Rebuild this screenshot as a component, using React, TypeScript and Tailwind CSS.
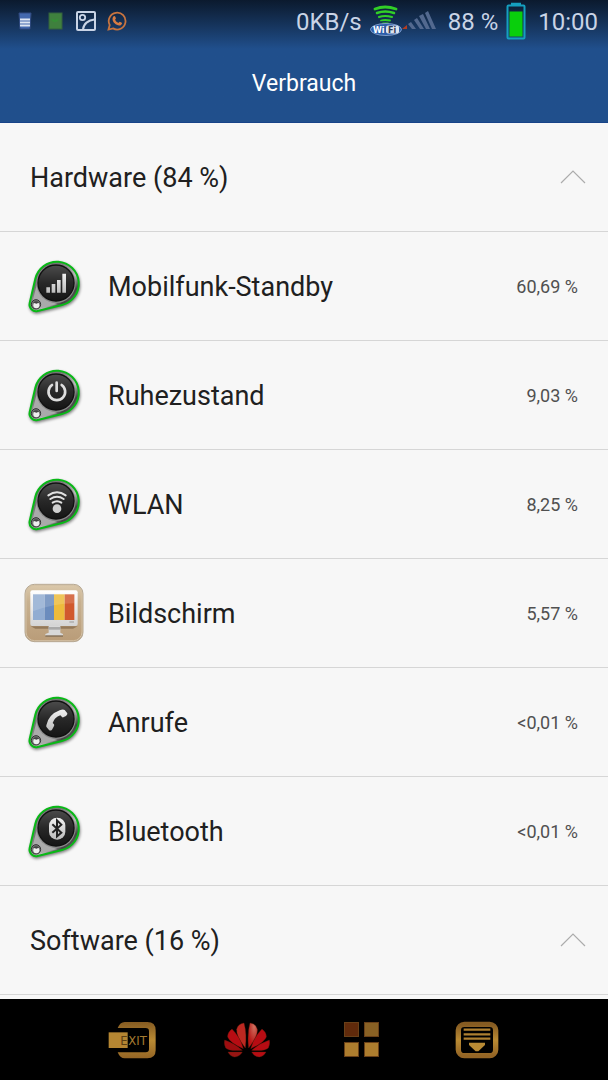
import { useState, type ReactNode } from 'react';

interface UsageItem {
  name: string;
  value: string;
  icon: ReactNode;
}

const TEARDROP = 'M34 61A66 66 0 1 1 114 140L41 158A20 20 0 0 1 17 134Z';

const hardware: UsageItem[] = [
  { name: 'Mobilfunk-Standby', value: '60,69 %', icon: <DropIcon id="cell"><SignalGlyph /></DropIcon> },
  { name: 'Ruhezustand', value: '9,03 %', icon: <DropIcon id="idle"><PowerGlyph /></DropIcon> },
  { name: 'WLAN', value: '8,25 %', icon: <DropIcon id="wlan"><WifiGlyph /></DropIcon> },
  { name: 'Bildschirm', value: '5,57 %', icon: <ScreenIcon /> },
  { name: 'Anrufe', value: '<0,01 %', icon: <DropIcon id="call"><PhoneGlyph /></DropIcon> },
  { name: 'Bluetooth', value: '<0,01 %', icon: <DropIcon id="bt"><BluetoothGlyph /></DropIcon> },
];

export default function App() {
  return (
    <div className="flex h-screen flex-col bg-[#f7f7f7] font-['Roboto','Noto_Sans',sans-serif] text-[#202020]">
      <header className="shrink-0 border-b border-[#174388] bg-linear-to-b from-[#0b1a2e] via-[#204f8c] via-40% to-[#204f8c]">
        <StatusBar />
        <h1 className="pt-[26px] pb-[22px] text-center text-[23px] leading-8 text-white">Verbrauch</h1>
      </header>

      <main className="min-h-0 flex-1 overflow-hidden">
        <Section title="Hardware (84 %)" items={hardware} />
        <Section title="Software (16 %)" items={[]} />
      </main>

      <NavBar />
    </div>
  );
}

function Section({ title, items }: { title: string; items: UsageItem[] }) {
  const [open, setOpen] = useState(true);

  return (
    <section>
      <h2>
        <button
          type="button"
          aria-expanded={open}
          onClick={() => setOpen(!open)}
          className="flex h-[109px] w-full items-center justify-between border-b border-[#d6d6d6] pr-[22px] pl-[30px] text-left text-[27px]"
        >
          <span className="pt-[2px]">{title}</span>
          <svg width="26" height="14" viewBox="0 0 26 14" fill="none" stroke="#acacac" strokeWidth="1.2" className={open ? '' : 'rotate-180'}>
            <path d="M1 13 13 1l12 12" />
          </svg>
        </button>
      </h2>
      {open && (
        <ul>
          {items.map(item => (
            <li key={item.name} className="flex h-[109px] items-center border-b border-[#d6d6d6] pr-[30px] pl-6">
              {item.icon}
              <span className="ml-6 flex-1 pt-[2px] text-[27px]">{item.name}</span>
              <span className="pt-[2px] text-lg text-[#505050]">{item.value}</span>
            </li>
          ))}
        </ul>
      )}
    </section>
  );
}

function StatusBar() {
  return (
    <div className="flex h-[42px] items-center pr-[10px] pl-[18px] text-2xl text-[#c9d4e6]">
      <div className="flex items-center gap-[11px]">
        {/* Notifications */}
        <svg width="16" height="18" viewBox="0 0 16 18">
          <path d="M1 1h12l-1 16H2Z" fill="#4469ae" stroke="#304a80" />
          <path d="M2 7.500h10M2 10.500h10M2 13.500h10" stroke="#dde5f2" strokeWidth="2" />
        </svg>
        <svg width="20" height="18" viewBox="0 0 20 18">
          <rect x="4" y="1" width="13" height="16" fill="#3f803e" stroke="#35613f" />
          <path d="M7 9l1-2 1 3 1-2 1 2 1-3 1 2" fill="none" stroke="#358f36" />
        </svg>
        <svg width="20" height="20" viewBox="0 0 20 20" fill="none" stroke="#c9d4e6" strokeWidth="2">
          <rect x="1" y="1" width="18" height="18" rx="1" />
          <circle cx="6.500" cy="6.500" r="2.700" strokeWidth="1.800" />
          <path d="M7 18.500C7.500 13 12 9 18.500 8.500" />
        </svg>
        <svg width="20" height="20" viewBox="0 0 20 20">
          <path d="M1.500 18.500 2.700 14A8.400 8.400 0 1 1 6 17.400Z" fill="none" stroke="#c8743f" strokeWidth="1.800" />
          <path d="M6.300 5.500c1-1 1.700-.6 2 .3l.6 1.500c.1.500-.7 1.100-.8 1.400.7 1.500 1.700 2.500 3.300 3.200.5-.2.900-1.200 1.400-1.100l2 1c.7.400-.2 2.200-1.400 2.600-2 .6-4.200-.5-5.800-2.100S4.600 8 6.300 5.500Z" fill="#d77b42" />
        </svg>
      </div>

      <span className="ml-auto pt-[2px]">0KB/s</span>
      <WifiStatus />
      <svg width="34" height="20" viewBox="0 0 34 20" fill="#53698f">
        <path d="M0 18 5 14v4Z" fill="#b33c20" />
        <path d="M6 13l3-2 5 7h-4Z M12 9l3-2 7 11h-4Z M17 5l4-2 7 15h-4Z M23 2l3-2 8 18h-4Z" />
      </svg>
      <span className="ml-3 pt-[2px]">88 %</span>
      <svg width="20" height="38" viewBox="0 0 20 38" className="ml-2">
        <rect x="1.500" y="3.500" width="17" height="33" rx="1" fill="none" stroke="#159fc0" strokeWidth="2" />
        <path d="M5 2h10" stroke="#159fc0" strokeWidth="2.500" />
        <rect x="3.500" y="9.500" width="13" height="25" fill="#09cf0c" />
      </svg>
      <span className="ml-3 pt-[2px]">10:00</span>
    </div>
  );
}

function WifiStatus() {
  return (
    <svg width="32" height="32" viewBox="0 0 32 32" className="ml-2">
      <g fill="none" stroke="#31cf27" strokeLinecap="round">
        <path d="M5 4q10-4 21 0" strokeWidth="2.800" />
        <path d="M7 8q8-3 17 0" strokeWidth="2.500" />
        <path d="M9 12q6-2 13 0" strokeWidth="2.200" />
        <path d="M11 15.500q4-1 9 0M13 18.500h5" strokeWidth="1.800" />
      </g>
      <ellipse cx="16" cy="24.500" rx="15.500" ry="6" fill="#2c5daa" stroke="#7e9cca" />
      <rect x="16" y="20.500" width="13" height="8" rx="2" fill="#dde4ed" />
      <text x="3" y="27.500" fill="#ffffff" fontFamily="DejaVu Sans" fontWeight="bold" fontSize="8">Wi</text>
      <text x="18" y="27.500" fill="#303b56" fontFamily="DejaVu Sans" fontWeight="bold" fontSize="8">Fi</text>
    </svg>
  );
}

function DropIcon({ id, children }: { id: string; children: ReactNode }) {
  return (
    <svg width="60" height="60" viewBox="0 -7 180 180" className="shrink-0 overflow-visible">
      <defs>
        <linearGradient id={`${id}-metal`} x1="0" y1="0" x2="1" y2="1">
          <stop offset="0" stopColor="#555" />
          <stop offset="0.35" stopColor="#777" />
          <stop offset="0.6" stopColor="#bbb" />
          <stop offset="0.75" stopColor="#444" />
          <stop offset="1" stopColor="#888" />
        </linearGradient>
        <linearGradient id={`${id}-face`} x1="0" y1="0" x2="0" y2="1">
          <stop offset="0" stopColor="#4c4c4c" />
          <stop offset="0.5" stopColor="#282828" />
          <stop offset="1" stopColor="#151515" />
        </linearGradient>
        <linearGradient id={`${id}-glyph`} x1="0" y1="0" x2="0" y2="1">
          <stop offset="0" stopColor="#f2f2f2" />
          <stop offset="1" stopColor="#bcbcbc" />
        </linearGradient>
        <filter id={`${id}-shadow`} x="-20%" y="-20%" width="140%" height="140%">
          <feGaussianBlur stdDeviation="4" />
        </filter>
      </defs>
      <path d={TEARDROP} fill="#000" opacity="0.5" stroke="#000" strokeWidth="5" transform="translate(2 5)" filter={`url(#${id}-shadow)`} />
      <path d={TEARDROP} fill={`url(#${id}-metal)`} stroke="#08b916" strokeWidth="6" strokeLinejoin="round" />
      <path d="M26 128 38 80Q50 125 100 137L46 151Z" fill="#aaa" />
      <circle cx="96" cy="75" r="59" fill="#8a8a8a" />
      <circle cx="96" cy="74" r="54" fill={`url(#${id}-face)`} stroke="#111" strokeWidth="4" />
      <circle cx="36" cy="138" r="14" fill="#777" stroke="#333" strokeWidth="3" />
      <circle cx="37" cy="141" r="9" fill="#eee" />
      <path d="M27 133q8-8 19-1l-8 4Z" fill="#444" />
      <g fill={`url(#${id}-glyph)`} stroke="none">{children}</g>
    </svg>
  );
}

function SignalGlyph() {
  return <path d="M67 87h11v16H67ZM83 77h11v26H83ZM99 65h11v38H99ZM115 46h11v57h-11Z" />;
}

function PowerGlyph() {
  return (
    <g fill="none" stroke="#dedede" strokeWidth="8" strokeLinecap="round">
      <path d="M84 53A25 25 0 1 0 113 53" />
      <path d="M98 46v25" />
    </g>
  );
}

function WifiGlyph() {
  return (
    <>
      <g fill="none" stroke="#e2e2e2" strokeWidth="6" strokeLinecap="round">
        <path d="M73 57Q99 39 125 57" />
        <path d="M79 68Q99 55 119 68" />
        <path d="M86 79Q99 70 112 79" />
      </g>
      <circle cx="99" cy="97" r="13" fill="#cfcfcf" />
    </>
  );
}

function PhoneGlyph() {
  return (
    <path d="M67 93Q74 60 107 48Q117 44 122 47L130 57Q131 61 126 65L118 69Q114 70 112 66L109 63Q91 70 86 86L90 90Q92 93 89 97L84 106Q79 111 75 107L68 99Q66 97 67 93Z" />
  );
}

function BluetoothGlyph() {
  return (
    <>
      <rect x="75" y="43" width="49" height="66" rx="24" />
      <path d="M85 63 112 88 99 99V51L112 64 85 88" fill="none" stroke="#222" strokeWidth="6" />
    </>
  );
}

function ScreenIcon() {
  return (
    <svg width="60" height="60" viewBox="0 0 180 180" className="shrink-0">
      <defs>
        <linearGradient id="screen-base" x1="0" y1="0" x2="0" y2="1">
          <stop offset="0" stopColor="#dccaac" />
          <stop offset="0.3" stopColor="#c8b190" />
          <stop offset="1" stopColor="#b99c78" />
        </linearGradient>
        <linearGradient id="screen-frame" x1="0" y1="0" x2="0" y2="1">
          <stop offset="0" stopColor="#fff" />
          <stop offset="1" stopColor="#d4d4d4" />
        </linearGradient>
      </defs>
      <rect x="3" y="4" width="174" height="172" rx="28" fill="url(#screen-base)" stroke="#b5a894" strokeWidth="3" />
      <rect x="6" y="7" width="168" height="166" rx="26" fill="none" stroke="#d3c1a5" strokeWidth="3" />
      <path d="M20 130h141l-14 7H34Z" fill="#93795a" />
      <path d="M74 128h35v21l8 4v6H64v-6l10-4Z" fill="#d8d8d8" />
      <path d="M74 132h35v8H74Z" fill="#a9a9a9" />
      <path d="M64 157h53v4H64Z" fill="#7f6a52" />
      <rect x="19" y="22" width="142" height="107" rx="6" fill="url(#screen-frame)" />
      <path d="M27 34h35v77H27Z" fill="#92add2" />
      <path d="M62 34h28v77H62Z" fill="#6b8cbd" />
      <path d="M90 34h32v77H90Z" fill="#edbb3c" />
      <path d="M122 34h29v77h-29Z" fill="#d1592e" />
      <path d="M27 34h124v27q-60 0-124 24Z" fill="#fff" opacity="0.15" />
      <path d="M136 117h14" stroke="#aaa" strokeWidth="4" />
    </svg>
  );
}

function NavBar() {
  return (
    <nav className="flex h-[81px] shrink-0 items-center bg-black px-[74px]">
      <button type="button" aria-label="Zurück" className="flex flex-1 justify-center">
        <svg width="48" height="38" viewBox="0 0 144 114">
          <defs>
            <linearGradient id="gold" x1="0" y1="0" x2="0" y2="1">
              <stop offset="0" stopColor="#855b22" />
              <stop offset="0.5" stopColor="#b98a33" />
              <stop offset="1" stopColor="#946525" />
            </linearGradient>
          </defs>
          <path d="M29 21Q36 3 50 3h68q25 0 25 25v60q0 24-25 24H50Q36 112 29 94h84q10 0 10-9V31q0-10-10-10Z" fill="url(#gold)" />
          <path d="M2 34h57v47H2Z" fill="#b58632" />
          <text x="37" y="71" fill="#5c3f12" fontFamily="DejaVu Sans" fontSize="35">E</text>
          <text x="61" y="71" fill="#a57b30" fontFamily="DejaVu Sans" fontSize="35">XIT</text>
        </svg>
      </button>
      <button type="button" aria-label="Startseite" className="flex flex-1 justify-center">
        <svg width="46" height="36" viewBox="0 0 138 108">
          <defs>
            <radialGradient id="petal" cx="0.65" cy="0.15" r="0.7">
              <stop offset="0" stopColor="#cf715f" />
              <stop offset="1" stopColor="#b91515" />
            </radialGradient>
          </defs>
          <g fill="#b70c13" stroke="#65200c" strokeWidth="1">
            <path d="M64 78Q36 43 38 22Q42 5 60 3Q69 35 64 78Z" fill="#bd2821" />
            <path d="M74 78Q102 43 100 22Q96 5 78 3Q69 35 74 78Z" fill="url(#petal)" />
            <path d="M58 80Q17 62 11 45Q10 31 24 21Q49 46 58 80Z" />
            <path d="M80 80Q121 62 127 45Q128 31 114 21Q89 46 80 80Z" />
            <path d="M55 85Q15 88 5 78Q-1 67 2 54Q34 65 55 85Z" fill="#9e0d10" />
            <path d="M83 85Q123 88 133 78Q139 67 136 54Q104 65 83 85Z" />
            <path d="M55 90H12Q19 104 32 105Q47 104 55 90Z" fill="#981513" />
            <path d="M83 90h43Q119 104 106 105Q91 104 83 90Z" />
          </g>
        </svg>
      </button>
      <button type="button" aria-label="Apps" className="flex flex-1 justify-center">
        <svg width="36" height="36" viewBox="0 0 36 36" stroke="#694018">
          <rect x="0.500" y="0.500" width="14" height="14" fill="#602a0b" />
          <rect x="20.500" y="0.500" width="14" height="14" fill="#896124" />
          <rect x="0.500" y="20.500" width="14" height="14" fill="#ad7d2e" />
          <rect x="20.500" y="20.500" width="14" height="14" fill="#ad7d2e" />
        </svg>
      </button>
      <button type="button" aria-label="Menü" className="flex flex-1 justify-center">
        <svg width="44" height="38" viewBox="0 0 132 114">
          <rect x="10" y="10" width="112" height="94" rx="18" fill="none" stroke="url(#gold)" strokeWidth="16" />
          <path d="M26 26h80M26 40h80M26 53h80" stroke="#ae8031" strokeWidth="7" />
          <path d="M42 65h48v7L70 91h-8L42 72Z" fill="#b88a34" />
        </svg>
      </button>
    </nav>
  );
}
